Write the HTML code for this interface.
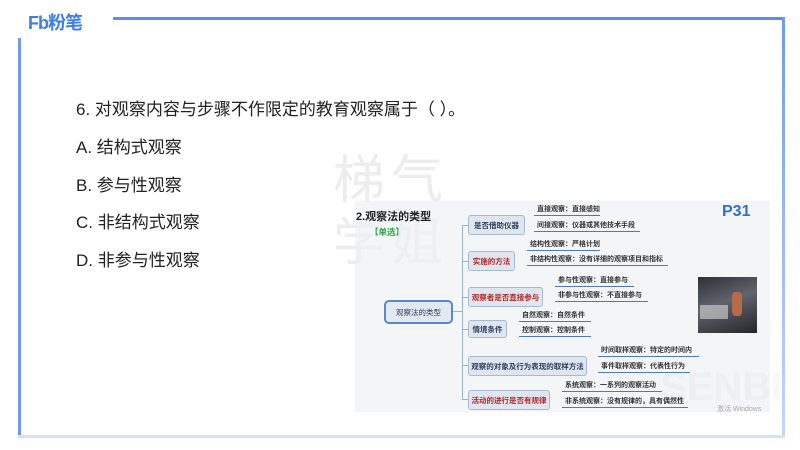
<!DOCTYPE html>
<html><head><meta charset="utf-8"><style>
*{margin:0;padding:0;box-sizing:border-box}
body{width:800px;height:450px;background:#fff;position:relative;overflow:hidden;font-family:"Liberation Sans","Noto Sans CJK SC",sans-serif}
.a{position:absolute;white-space:nowrap}
.q{font-size:17px;color:#222;left:76px}
.bx{position:absolute;background:#dfe6ef;border:1px solid #a9bad0;border-radius:3px;font-size:7.5px;font-weight:bold;color:#2c3e5c;display:flex;align-items:center;justify-content:center;height:20px}
.red{color:#b02828}
.lf{position:absolute;font-size:7px;font-weight:bold;color:#333;white-space:nowrap;border-bottom:1.5px solid #4f78c0;padding:0 3px 1px 3px;line-height:9px}
.ln{position:absolute;background:#9db0c8}
</style></head><body>
<div class="a" style="left:28px;top:9px;font-size:18px;font-weight:bold;color:#3f7de8;letter-spacing:-1px">Fb粉笔</div>
<div class="a" style="left:113px;top:17px;width:672px;height:3px;background:#5b8def"></div>
<div class="a" style="left:782px;top:17px;width:3px;height:420px;background:linear-gradient(#6f9af0,#c5d6f8)"></div>
<div class="a" style="left:18px;top:38px;width:3px;height:400px;background:#6f9af0"></div>
<div class="a" style="left:18px;top:435px;width:767px;height:3px;background:#d5e1fa"></div>

<div class="a q" style="top:95px">6. 对观察内容与步骤不作限定的教育观察属于（ ）。</div>
<div class="a q" style="top:133px">A. 结构式观察</div>
<div class="a q" style="top:171px">B. 参与性观察</div>
<div class="a q" style="top:208px">C. 非结构式观察</div>
<div class="a q" style="top:246px">D. 非参与性观察</div>

<div class="a" style="left:333px;top:150px;font-size:52px;color:#f2f2f2;line-height:62px;letter-spacing:6px">梯气<br>学姐</div>
<div class="a" style="left:355px;top:201px;width:415px;height:211px;background:#f4f5f7"></div>
<div class="a" style="left:333px;top:150px;font-size:52px;color:rgba(225,225,225,.3);line-height:62px;letter-spacing:6px">梯气<br>学姐</div>
<div class="a" style="left:356px;top:208px;font-size:11px;font-weight:bold;color:#222">2.观察法的类型</div>
<div class="a" style="left:370px;top:226px;font-size:8.5px;font-weight:bold;color:#2aa84a">【单选】</div>
<div class="a" style="left:722px;top:203px;font-size:16px;font-weight:bold;color:#2f6fc8">P31</div>
<div class="a" style="left:698px;top:277px;width:59px;height:56px;background:linear-gradient(160deg,#2e3038,#5f636c 45%,#26262a);"></div>
<div class="a" style="left:700px;top:305px;width:28px;height:14px;background:#d8d8d8;opacity:.6"></div>
<div class="a" style="left:732px;top:292px;width:10px;height:24px;background:#b86a4a;border-radius:4px"></div>
<div class="a" style="left:660px;top:365px;font-size:40px;color:rgba(210,215,225,.18);font-weight:bold">SENBI</div>
<div class="a" style="left:717px;top:404px;font-size:7px;color:#aaa">激活 Windows</div>

<div class="bx" style="left:384px;top:300px;width:69px;height:24px;border:2px solid #5b86c8;border-radius:5px;background:#e3e9f2;font-weight:normal">观察法的类型</div>
<div class="ln" style="left:453px;top:311px;width:9px;height:1px"></div>
<div class="ln" style="left:462px;top:225px;width:1px;height:175px"></div>
<div class="ln" style="left:462px;top:225px;width:6px;height:1px"></div>
<div class="ln" style="left:462px;top:261px;width:6px;height:1px"></div>
<div class="ln" style="left:462px;top:297px;width:6px;height:1px"></div>
<div class="ln" style="left:462px;top:329px;width:6px;height:1px"></div>
<div class="ln" style="left:462px;top:365px;width:6px;height:1px"></div>
<div class="ln" style="left:462px;top:399px;width:6px;height:1px"></div>

<div class="bx" style="left:468px;top:215px;width:57px">是否借助仪器</div>
<div class="bx red" style="left:468px;top:251px;width:47px">实施的方法</div>
<div class="bx red" style="left:468px;top:287px;width:75px">观察者是否直接参与</div>
<div class="bx" style="left:468px;top:320px;width:39px;height:18px">情境条件</div>
<div class="bx" style="left:468px;top:356px;width:119px">观察的对象及行为表现的取样方法</div>
<div class="bx red" style="left:468px;top:390px;width:82px">活动的进行是否有规律</div>

<div class="lf" style="left:534px;top:205px;width:66px">直接观察：直接感知</div>
<div class="lf" style="left:534px;top:221px;width:106px">间接观察：仪器或其他技术手段</div>
<div class="lf" style="left:527px;top:240px;width:73px">结构性观察：严格计划</div>
<div class="lf" style="left:527px;top:255px;width:141px">非结构性观察：没有详细的观察项目和指标</div>
<div class="lf" style="left:555px;top:276px;width:79px">参与性观察：直接参与</div>
<div class="lf" style="left:555px;top:291px;width:93px">非参与性观察：不直接参与</div>
<div class="lf" style="left:519px;top:311px;width:72px">自然观察：自然条件</div>
<div class="lf" style="left:519px;top:326px;width:72px">控制观察：控制条件</div>
<div class="lf" style="left:598px;top:346px;width:101px">时间取样观察：特定的时间内</div>
<div class="lf" style="left:598px;top:362px;width:92px">事件取样观察：代表性行为</div>
<div class="lf" style="left:562px;top:381px;width:100px">系统观察：一系列的观察活动</div>
<div class="lf" style="left:562px;top:397px;width:126px">非系统观察：没有规律的，具有偶然性</div>
</body></html>
